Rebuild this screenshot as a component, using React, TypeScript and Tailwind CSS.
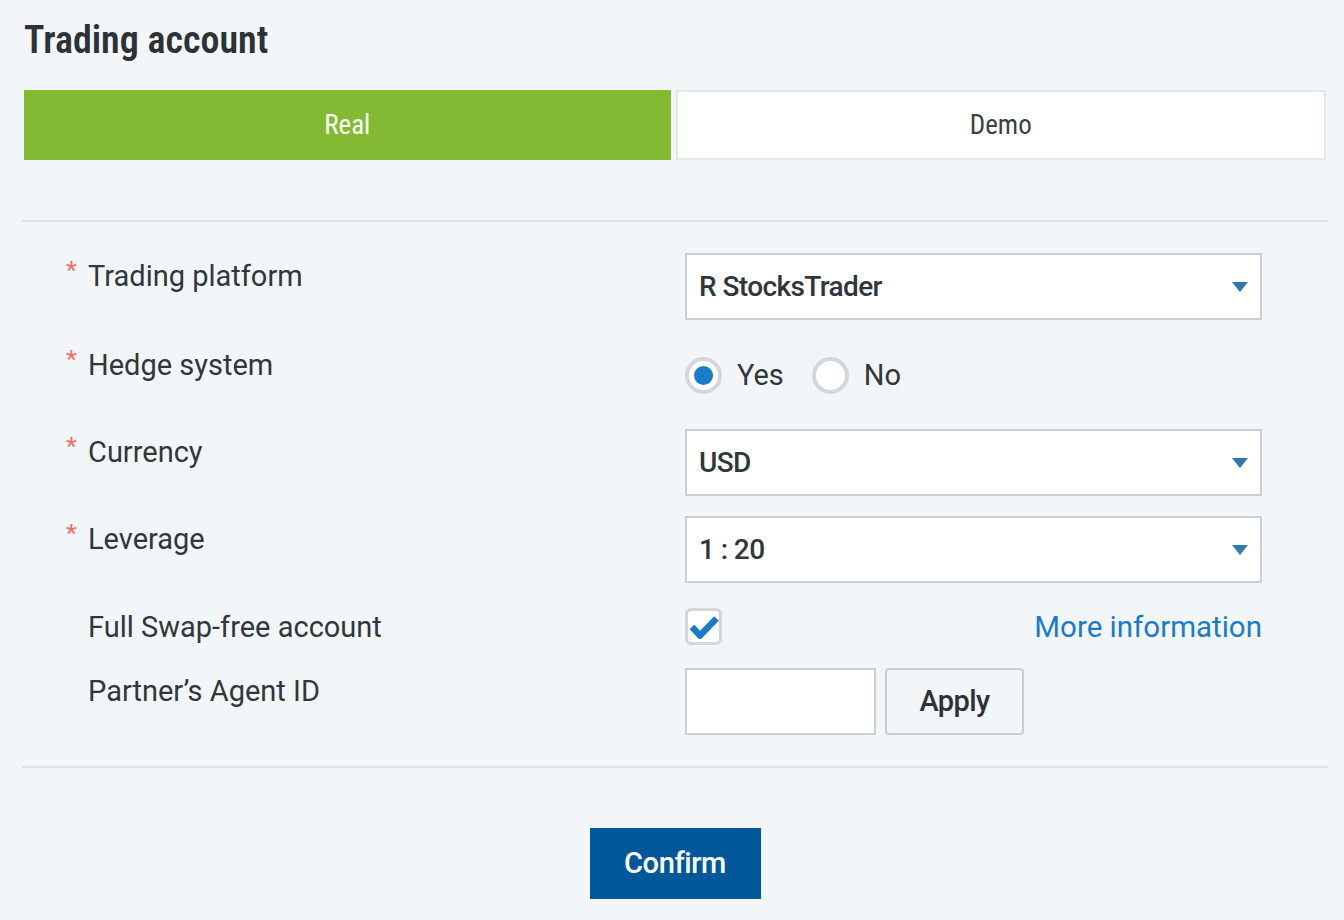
import { useState } from "react";

const labelFont = { fontFamily: 'Roboto, "Liberation Sans", sans-serif' };
const condFont = {
  fontFamily: '"Roboto Condensed", "Liberation Sans Narrow", "DejaVu Sans Condensed", Roboto, sans-serif',
};

function Label({ text, required }: { text: string; required?: boolean }) {
  return (
    <div className="flex w-[619px] shrink-0 items-start pt-[5px]">
      <span className="w-[22px] shrink-0 pt-[2px] text-[24px] leading-[20px] font-medium text-[#f2716b]">
        {required ? "*" : ""}
      </span>
      <span className="text-[29px] leading-[36px] text-[#30373c]">{text}</span>
    </div>
  );
}

function Select({ value }: { value: string }) {
  return (
    <div className="flex h-[67px] w-[577px] items-center justify-between border-2 border-[#c9d0d6] bg-white pl-[12px] pr-[12px]">
      <span className="text-[28px] font-medium tracking-[-0.6px] text-[#30373c]">{value}</span>
      <svg width="16" height="10" viewBox="0 0 16 10">
        <path d="M0 0h16L8 10z" fill="#2f78b0" />
      </svg>
    </div>
  );
}

function Radio({ checked, label, onClick }: { checked: boolean; label: string; onClick: () => void }) {
  return (
    <button onClick={onClick} className="flex items-center gap-[15px]">
      <span className="flex h-[37px] w-[37px] items-center justify-center rounded-full border-[4px] border-[#d3d6da] bg-white">
        {checked && <span className="h-[19px] w-[19px] rounded-full bg-[#1a7bc9]" />}
      </span>
      <span className="text-[29px] leading-[36px] text-[#30373c]">{label}</span>
    </button>
  );
}

export default function App() {
  const [tab, setTab] = useState<"real" | "demo">("real");
  const [hedge, setHedge] = useState(true);
  const [swap, setSwap] = useState(true);

  const tabClass = (active: boolean) =>
    active
      ? "flex h-[70px] flex-1 items-center justify-center bg-[#82ba33] text-[27px] text-white"
      : "flex h-[70px] flex-1 items-center justify-center border-2 border-[#e6e8ea] bg-white text-[27px] text-[#3a4146]";

  return (
    <div className="min-h-[920px] bg-[#f3f6f9] pl-[22px] pr-[16px] pt-[17px]" style={labelFont}>
      <h1 className="ml-[2px] text-[38px] font-semibold leading-[46px] text-[#2c3338]" style={condFont}>
        Trading account
      </h1>

      <div className="mx-[2px] mt-[27px] flex gap-[5px]">
        <button onClick={() => setTab("real")} className={tabClass(tab === "real")} style={condFont}>
          Real
        </button>
        <button onClick={() => setTab("demo")} className={tabClass(tab === "demo")} style={condFont}>
          Demo
        </button>
      </div>

      <div className="mt-[60px] h-[2px] bg-[#dfe4e8]" />

      <div className="flex flex-col pl-[44px]">
        <div className="mt-[31px] flex">
          <Label text="Trading platform" required />
          <Select value="R StocksTrader" />
        </div>

        <div className="mt-[22px] flex h-[67px]">
          <Label text="Hedge system" required />
          <div className="flex items-center gap-[28px] pb-[1px]">
            <Radio checked={hedge} label="Yes" onClick={() => setHedge(true)} />
            <Radio checked={!hedge} label="No" onClick={() => setHedge(false)} />
          </div>
        </div>

        <div className="mt-[20px] flex">
          <Label text="Currency" required />
          <Select value="USD" />
        </div>

        <div className="mt-[20px] flex">
          <Label text="Leverage" required />
          <Select value="1 : 20" />
        </div>

        <div className="mt-[25px] flex h-[37px] items-center">
          <div className="w-[619px] shrink-0 pl-[22px] text-[29px] leading-[36px] text-[#30373c]">
            Full Swap-free account
          </div>
          <div className="flex w-[577px] items-center justify-between">
            <button
              onClick={() => setSwap(!swap)}
              className="flex h-[37px] w-[37px] items-center justify-center rounded-[6px] border-[3px] border-[#d3d6da] bg-white"
            >
              {swap && (
                <svg width="30" height="24" viewBox="0 0 30 24" className="mt-[1px] shrink-0">
                  <path d="M3 12l8 8.5L27.5 3.5" fill="none" stroke="#1a7bc9" strokeWidth="6.5" />
                </svg>
              )}
            </button>
            <a className="text-[29.5px] leading-[36px] text-[#1a7bc9]">More information</a>
          </div>
        </div>

        <div className="mt-[23px] flex">
          <Label text="Partner’s Agent ID" />
          <div className="flex gap-[9px]">
            <input className="h-[67px] w-[191px] border-2 border-[#c9d0d6] bg-white outline-none" />
            <button className="h-[67px] w-[139px] rounded-[4px] border-2 border-[#c9ced3] text-[29px] font-medium tracking-[-0.6px] text-[#2c3338]">
              Apply
            </button>
          </div>
        </div>
      </div>

      <div className="mt-[31px] h-[2px] bg-[#dfe4e8]" />

      <div className="flex justify-center pt-[60px]">
        <button className="h-[71px] w-[171px] bg-[#00589b] text-[29px] font-medium tracking-[-0.4px] text-white">
          Confirm
        </button>
      </div>
    </div>
  );
}
